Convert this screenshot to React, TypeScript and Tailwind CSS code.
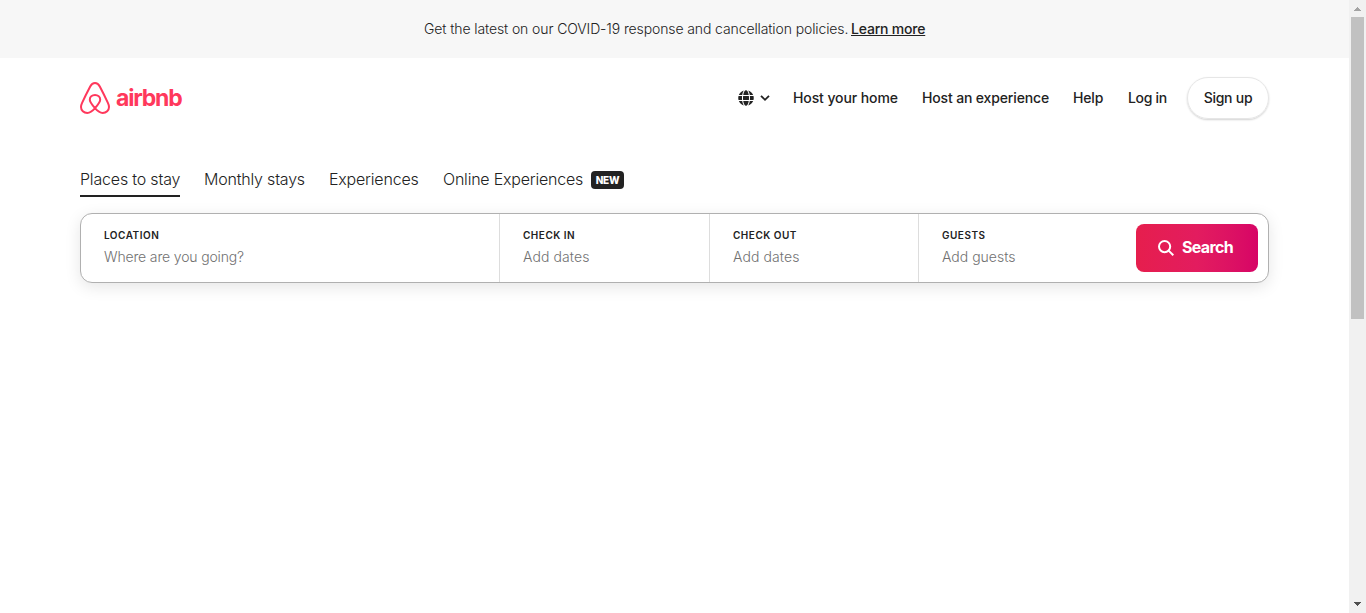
import React from "react";
import { FaGlobe } from "react-icons/fa";

function Logo() {
  return (
    <a className="flex h-8 items-center text-[#ff385c]">
      <svg width="30" height="32" viewBox="0 0 30 32" fill="none" stroke="currentColor" strokeWidth="2" strokeLinejoin="round">
        <path d="M15 26.2C11.4 22.1 9.8 20 9.8 17.8C9.8 14.9 12.1 13.1 15 13.1S20.2 14.9 20.2 17.8C20.2 20 18.6 22.1 15 26.2C12.1 29.6 9.7 31 7.3 31C3.8 31 1 28.3 1 24.9C1 23.4 1.4 22.4 2.1 20.9C4.6 15.4 7.4 9.8 10.2 4.5C11.4 2.2 12.7 1 15 1S18.6 2.2 19.8 4.5C22.6 9.8 25.4 15.4 27.9 20.9C28.6 22.4 29 23.4 29 24.9C29 28.3 26.2 31 22.7 31C20.3 31 17.9 29.6 15 26.2Z" />
      </svg>
      <span className="ml-[6px] text-[23px] leading-8 font-bold tracking-[-1.2px]">airbnb</span>
    </a>
  );
}

function Field({ label, hint, className, hintClass = "" }: { label: string; hint: string; className: string; hintClass?: string }) {
  return (
    <div className={`flex flex-col pt-[15px] ${className}`}>
      <span className="text-[10px] leading-3 font-semibold tracking-[0.5px] text-[#222222]">{label}</span>
      <span className={`mt-[6px] text-[14px] leading-5 font-light text-[#717171] ${hintClass}`}>{hint}</span>
    </div>
  );
}

function Scrollbar() {
  return (
    <div className="flex h-[613px] w-[17px] flex-col items-center bg-[#f1f1f1]">
      <svg width="17" height="17" viewBox="0 0 17 17" shapeRendering="crispEdges">
        <path d="M5 11h7v-1h-1v-1h-1v-1h-1v-1h-1v1h-1v1h-1v1h-1z" fill="#a3a3a3" />
      </svg>
      <div className="h-[302px] w-[13px] bg-[#c1c1c1]" />
      <div className="flex-1" />
      <svg width="17" height="17" viewBox="0 0 17 17" shapeRendering="crispEdges">
        <path d="M5 6h7v1h-1v1h-1v1h-1v1h-1v-1h-1v-1h-1v-1h-1z" fill="#505050" />
      </svg>
    </div>
  );
}

export default function App() {
  return (
    <div className="flex h-[613px] w-[1366px] overflow-hidden bg-white font-['Inter','Liberation_Sans',sans-serif] text-[#222222]">
      <div className="w-[1349px]">
        <div className="flex h-[58px] items-center justify-center gap-1 bg-[#f7f7f7] pb-[2px] text-[14px] font-light whitespace-nowrap">
          <span className="w-[423px] tracking-[-0.11px]">Get the latest on our COVID-19 response and cancellation policies.</span>
          <a className="w-[74px] font-medium tracking-[-0.2px] underline">Learn more</a>
        </div>
        <div className="px-20">
          <header className="flex h-20 items-center justify-between">
            <Logo />
            <nav className="flex items-center text-[14px] font-medium whitespace-nowrap">
              <FaGlobe size={16} />
              <svg className="mr-[23px] ml-[6px]" width="10" height="16" viewBox="0 0 10 16" fill="none" stroke="currentColor" strokeWidth="1.8">
                <path d="M1 5.8 5 9.8 9 5.8" />
              </svg>
              <a className="mr-6 w-[105px] pb-[2px] tracking-[-0.1px]">Host your home</a>
              <a className="mr-6 w-[127px] pb-[2px] tracking-[-0.15px]">Host an experience</a>
              <a className="mr-6 w-[31px] pb-[2px] tracking-[-0.15px]">Help</a>
              <a className="mr-5 w-[39px] pb-[2px] tracking-[-0.3px]">Log in</a>
              <a className="flex h-[42px] w-[82px] items-center justify-center rounded-full border border-[#e6e6e6] pb-[2px] tracking-[-0.25px] shadow-[0_1px_2px_rgba(0,0,0,0.18)]">Sign up</a>
            </nav>
          </header>
          <div className="mt-[29px] flex h-[30px] gap-6 text-[16px] leading-6 font-light whitespace-nowrap">
            <a className="w-[100px] border-b-2 border-[#222222] tracking-[-0.18px]">Places to stay</a>
            <a className="w-[101px] tracking-[-0.2px]">Monthly stays</a>
            <a className="w-[90px] tracking-[-0.2px]">Experiences</a>
            <div className="flex items-start">
              <a className="w-[148px] tracking-[-0.22px]">Online Experiences</a>
              <span className="mt-1 flex h-[18px] w-[33px] items-center justify-center rounded bg-[#222222] text-[10px] font-extrabold tracking-[-0.2px] text-white">NEW</span>
            </div>
          </div>
          <div className="mt-4 flex h-[70px] rounded-xl border border-[#b0b0b0] bg-white whitespace-nowrap shadow-[0_4px_16px_rgba(0,0,0,0.1)]">
            <Field label="LOCATION" hint="Where are you going?" className="w-[418px] pl-[23px]" hintClass="tracking-[-0.15px]" />
            <Field label="CHECK IN" hint="Add dates" className="w-[210px] border-l border-[#dddddd] pl-[23px]" hintClass="tracking-[0.1px]" />
            <Field label="CHECK OUT" hint="Add dates" className="w-[209px] border-l border-[#dddddd] pl-[23px]" hintClass="tracking-[0.1px]" />
            <Field label="GUESTS" hint="Add guests" className="w-[218px] border-l border-[#dddddd] pl-[23px]" />
            <button className="mt-[10px] flex h-12 w-[122px] items-center rounded-lg bg-linear-to-r from-[#e61e4d] via-[#e31c5f] to-[#d70466] pl-[22px] text-[16px] font-bold text-white">
              <svg width="16" height="16" viewBox="0 0 16 16" fill="none" stroke="currentColor" strokeWidth="2">
                <circle cx="6.6" cy="6.6" r="5.6" />
                <path d="m10.6 10.6 4.7 4.7" />
              </svg>
              <span className="ml-2 pb-[2px] tracking-[-0.65px]">Search</span>
            </button>
          </div>
        </div>
      </div>
      <Scrollbar />
    </div>
  );
}
